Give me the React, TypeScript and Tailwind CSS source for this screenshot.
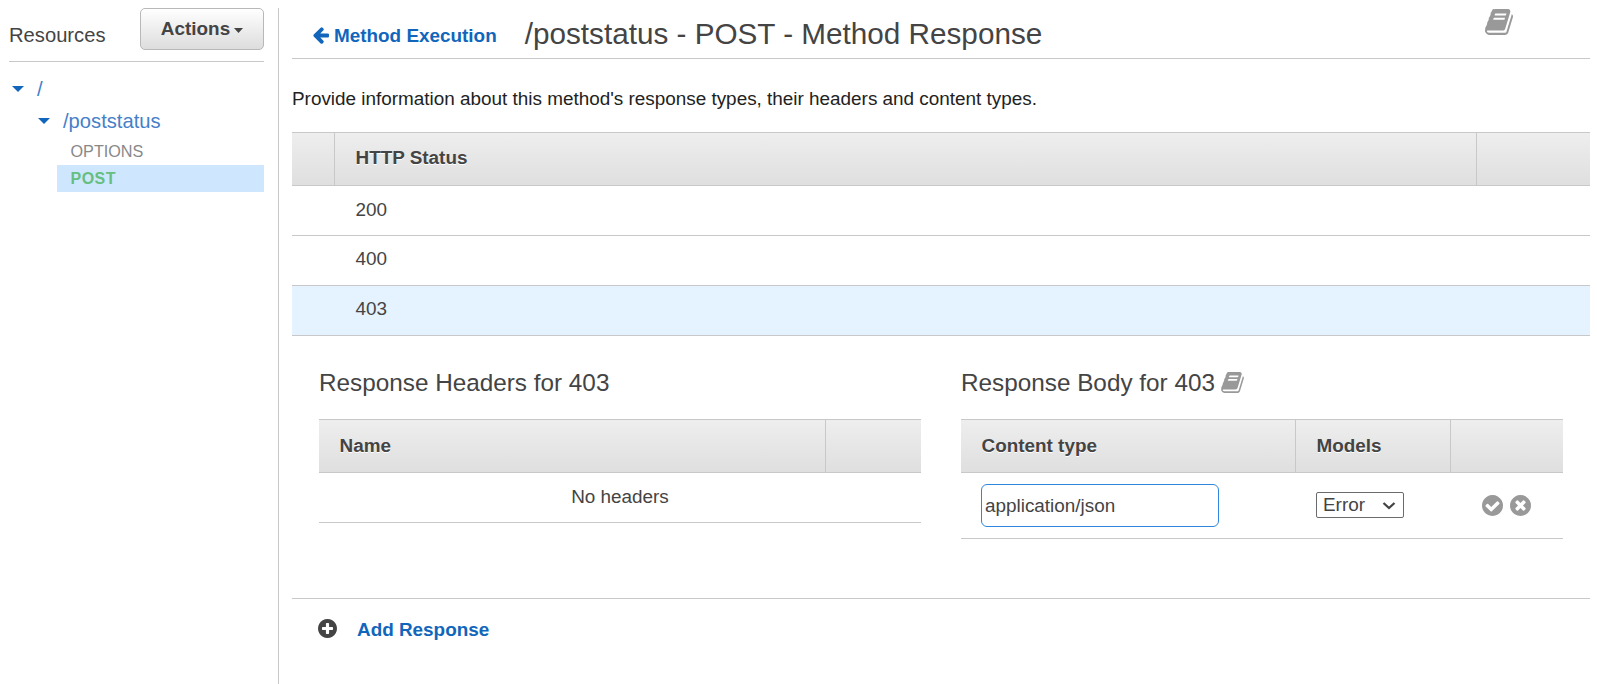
import React from "react";

const DISC =
  "m320-64q0 209-103 385.5t-279.5 279.5-385.5 103-385.5-103-279.5-279.5-103-385.5 103-385.5 279.5-279.5 385.5-103 385.5 103 279.5 279.5 103 385.5z";

const paths = {
  arrowLeft:
    "M1664 896v128q0 53-32.5 90.5t-84.5 37.5h-704l293 294q38 36 38 90t-38 90l-75 76q-37 37-90 37-52 0-91-37l-651-652q-37-37-37-90 0-52 37-91l651-650q38-38 91-38 52 0 90 38l75 74q38 38 38 91t-38 91l-293 293h704q52 0 84.5 37.5t32.5 90.5z",
  plus:
    "M1344 960v-128q0-26-19-45t-45-19h-256v-256q0-26-19-45t-45-19h-128q-26 0-45 19t-19 45v256h-256q-26 0-45 19t-19 45v128q0 26 19 45t45 19h256v256q0 26 19 45t45 19h128q26 0 45-19t19-45v-256h256q26 0 45-19t19-45z" +
    DISC,
  check:
    "M1412 734q0-28-18-46l-91-90q-19-19-45-19t-45 19l-408 407-226-226q-19-19-45-19t-45 19l-91 90q-18 18-18 46 0 27 18 45l362 362q19 19 45 19 27 0 46-19l543-543q18-18 18-45zm252 162q0 209-103 385.5t-279.5 279.5-385.5 103-385.5-103-279.5-279.5-103-385.5 103-385.5 279.5-279.5 385.5-103 385.5 103 279.5 279.5 103 385.5z",
  times:
    "M1277 1122q0-26-19-45l-181-181 181-181q19-19 19-45 0-27-19-46l-90-90q-19-19-46-19-26 0-45 19l-181 181-181-181q-19-19-45-19-27 0-46 19l-90 90q-19 19-19 46 0 26 19 45l181 181-181 181q-19 19-19 45 0 27 19 46l90 90q19 19 46 19 26 0 45-19l181-181 181 181q19 19 45 19 27 0 46-19l90-90q19-19 19-46zm387-226q0 209-103 385.5t-279.5 279.5-385.5 103-385.5-103-279.5-279.5-103-385.5 103-385.5 279.5-279.5 385.5-103 385.5 103 279.5 279.5 103 385.5z",
  book:
    "M1639 478q40 57 18 129l-275 906q-19 64-76.5 107.5t-122.5 43.5h-923q-77 0-148.5-53.5t-99.5-131.5q-24-67-2-127 0-4 3-27t4-37q1-8-3-21.5t-3-19.5q2-11 8-21t16.5-23.5 16.5-23.5q23-38 45-91.5t30-91.5q3-10 .5-30t-.5-28q3-11 17-28t17-23q21-36 42-92t25-90q1-9-2.5-32t.5-28q4-13 22-30.5t22-22.5q19-26 42.5-84.5t27.5-96.5q1-8-3-25.5t-2-26.5q2-8 9-18t18-23 17-21q8-12 16.5-30.5t15-35 16-36 19.5-32 26.5-23.5 36-11.5 47.5 5.5l-1 3q38-9 51-9h761q74 0 114 56t18 130l-274 906q-36 119-71.5 153.5t-128.5 34.5h-869q-27 0-38 15-11 16-1 43 24 70 144 70h923q29 0 56-15.5t35-41.5l300-987q7-22 5-57 38 15 59 43zm-1064 2q-4 13 2 22.5t20 9.500h608q13 0 25.5-9.5t16.5-22.5l21-64q4-13-2-22.5t-20-9.5h-608q-13 0-25.5 9.5t-16.5 22.5zm-83 256q-4 13 2 22.5t20 9.5h608q13 0 25.5-9.5t16.5-22.5l21-64q4-13-2-22.5t-20-9.5h-608q-13 0-25.5 9.5t-16.5 22.5z",
};

function Icon({ name, className, box = "128 128 1536 1536" }: { name: keyof typeof paths; className: string; box?: string }) {
  return (
    <svg viewBox={box} fill="currentColor" className={`shrink-0 ${className}`} aria-hidden="true">
      <path d={paths[name]} />
    </svg>
  );
}

function Caret({ className }: { className: string }) {
  return (
    <svg viewBox="0 0 12 6" preserveAspectRatio="none" fill="currentColor" className={`shrink-0 ${className}`} aria-hidden="true">
      <path d="M0 0h12l-6 6z" />
    </svg>
  );
}

const headRow =
  "flex h-[54px] border-y border-[#c8c8c8] bg-linear-to-b from-[#eeeeee] to-[#dfdfdf] font-bold [text-shadow:0_1px_0_#fff]";

function StatusRow({ code, selected = false }: { code: string; selected?: boolean }) {
  return (
    <div
      className={`h-[50px] border-b border-[#c8c8c8] pl-[63.5px] leading-[46px] first:leading-[48px] ${selected ? "bg-[#e5f2ff]" : ""}`}
    >
      {code}
    </div>
  );
}

function Sidebar() {
  return (
    <aside className="w-[255px] shrink-0 pt-2">
      <div className="flex h-[54px] items-start justify-between border-b border-[#c8c8c8]">
        <h2 className="pt-[13px] text-[20.2px] leading-[28px]">Resources</h2>
        <button className="flex h-[42px] w-[124px] items-start justify-center gap-[4px] rounded-[5px] border border-[#b8b8b8] bg-linear-to-b from-white to-[#dddddd] text-[18.9px] leading-[39px] font-bold">
          Actions
          <Caret className="mt-[19px] h-[5px] w-[9px]" />
        </button>
      </div>
      <ul className="pt-[11px] text-[20.2px] text-[#4580c8]">
        <li className="flex h-[32px] items-center pl-[3px]">
          <Caret className="h-[6px] w-[12px] text-[#1166bb]" />
          <span className="pl-[13px]">/</span>
        </li>
        <li className="flex h-[32px] items-center pl-[29px]">
          <Caret className="h-[6px] w-[12px] text-[#1166bb]" />
          <span className="pl-[13px]">/poststatus</span>
        </li>
        <li className="ml-12 h-[28px] pl-[13.5px] text-[16.2px] leading-[28px] text-[#888888]">OPTIONS</li>
        <li className="ml-12 h-[27px] bg-[#cfe6ff] pl-[13.5px] text-[16px] leading-[28px] font-bold tracking-[0.5px] text-[#66bf80]">POST</li>
      </ul>
    </aside>
  );
}

function ResponseHeaders() {
  return (
    <section className="w-[602px]">
      <h3 className="h-[83px] pt-[31px] text-[24.3px] leading-[32px]">Response Headers for 403</h3>
      <div className={`${headRow} leading-[51px]`}>
        <div className="w-[507px] border-r border-[#c8c8c8] pl-[20.5px]">Name</div>
        <div className="flex-1" />
      </div>
      <div className="h-[50px] border-b border-[#c8c8c8] text-center leading-[47px]">No headers</div>
    </section>
  );
}

function ResponseBody() {
  return (
    <section className="w-[602px]">
      <h3 className="flex h-[83px] pt-[31px] text-[24.3px] leading-[32px]">
        Response Body for 403
        <Icon name="book" box="0 128 1664 1536" className="mt-[5px] ml-[6px] h-[21px] w-[23px] text-[#999999]" />
      </h3>
      <div className={`${headRow} leading-[51px]`}>
        <div className="w-[335px] border-r border-[#c8c8c8] pl-[20.5px]">Content type</div>
        <div className="w-[155px] border-r border-[#c8c8c8] pl-[20.5px]">Models</div>
        <div className="flex-1" />
      </div>
      <div className="flex h-[66px] items-center border-b border-[#c8c8c8]">
        <div className="w-[335px] pl-[20px]">
          <input
            defaultValue="application/json"
            className="block h-[43px] w-[238px] rounded-[6px] border border-[#2f86dd] bg-white px-[3px] outline-none"
          />
        </div>
        <div className="w-[155px] pb-[2px] pl-[20px]">
          <button className="flex h-[26px] w-[88px] items-center justify-between rounded-[2px] border border-[#6b6b6b] bg-white pr-[7px] pl-[6px]">
            <span className="leading-[24px]">Error</span>
            <svg viewBox="0 0 14 8" className="mt-[2px] h-[8px] w-[14px]" fill="none" stroke="currentColor" strokeWidth="2.3">
              <path d="M1.500 1l5.500 5L12.500 1" />
            </svg>
          </button>
        </div>
        <div className="flex gap-[7px] pl-[31px] text-[#999999]">
          <Icon name="check" className="h-[21px] w-[21px]" />
          <Icon name="times" className="h-[21px] w-[21px]" />
        </div>
      </div>
    </section>
  );
}

export default function App() {
  return (
    <div className="flex h-[684px] w-[1597px] overflow-hidden bg-white pl-[9px] font-['Liberation_Sans',Arial,sans-serif] text-[18.9px] text-[#444444]">
      <Sidebar />
      <main className="mt-2 ml-[14px] flex-1 border-l border-[#c8c8c8] pr-[7px] pl-[13px]">
        <header className="flex h-[51px] border-b border-[#c8c8c8]">
          <a className="flex pl-[20px] leading-[55px] font-bold text-[#1166bb]">
            <Icon name="arrowLeft" box="64 192 1600 1536" className="mt-[19px] mr-[5px] h-[17px] w-[17px]" />
            Method Execution
          </a>
          <h1 className="pl-[28px] text-[29.7px] leading-[52px]">/poststatus - POST - Method Response</h1>
          <Icon name="book" box="0 128 1664 1536" className="mt-[1px] mr-[77px] ml-auto h-[26px] w-[28px] text-[#999999]" />
        </header>
        <p className="h-[73px] pt-[26px] leading-[28px] text-[#222222]">
          Provide information about this method's response types, their headers and content types.
        </p>
        <div className={`${headRow} leading-[49px]`}>
          <div className="w-[43px] border-r border-[#c8c8c8]" />
          <div className="w-[1142px] border-r border-[#c8c8c8] pl-[20.5px]">HTTP Status</div>
          <div className="flex-1" />
        </div>
        <div>
          <StatusRow code="200" />
          <StatusRow code="400" />
          <StatusRow code="403" selected />
        </div>
        <div className="flex h-[263px] gap-[40px] border-b border-[#c8c8c8] pl-[27px]">
          <ResponseHeaders />
          <ResponseBody />
        </div>
        <div className="flex pl-[26px] leading-[61px] font-bold text-[#1166bb]">
          <Icon name="plus" className="mt-[20px] mr-[20px] h-[19px] w-[19px] text-[#444444]" />
          Add Response
        </div>
      </main>
    </div>
  );
}
